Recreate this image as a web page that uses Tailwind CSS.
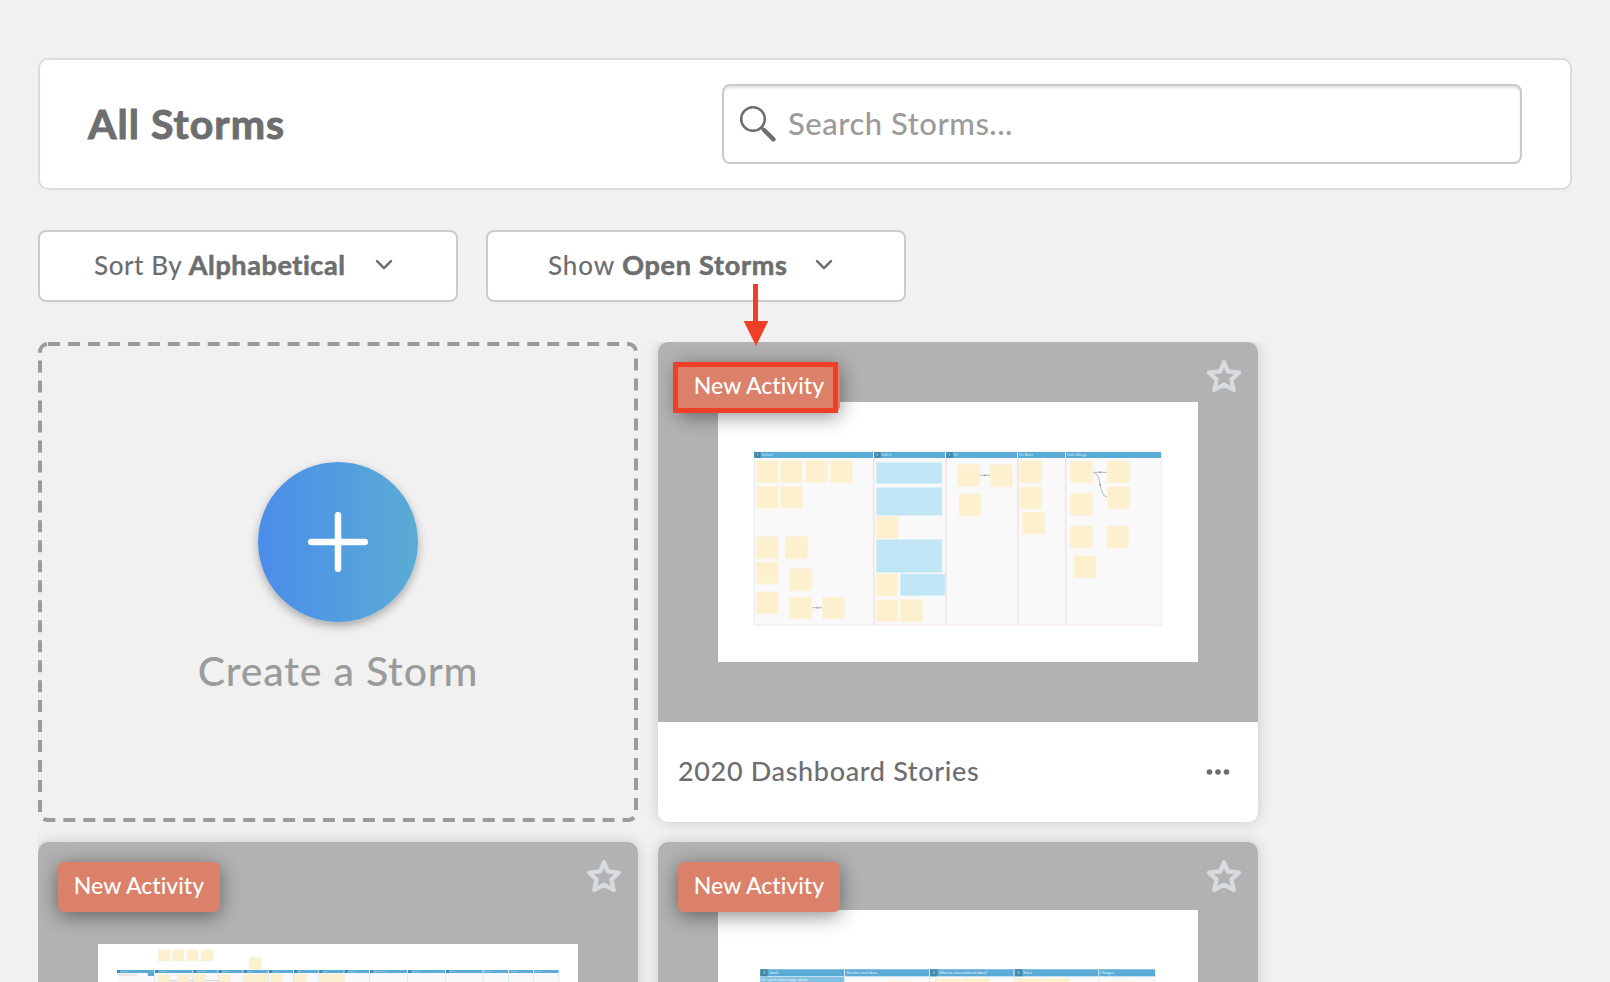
<!DOCTYPE html>
<html lang="en">
<head>
<meta charset="utf-8">
<title>All Storms</title>
<script src="https://cdn.jsdelivr.net/npm/@tailwindcss/browser@4"></script>
</head>
<body class="h-[982px] overflow-hidden bg-[#f1f1f1] font-['Lato',sans-serif] font-medium text-[#6d6e70]">
<svg class="hidden">
  <symbol id="star" viewBox="0 0 34 34"><path d="M17 3.2 20.7 12.3 32 13.6 24.3 20.6 26.8 31 17 25.7 7.2 31 9.7 20.6 2 13.6 13.3 12.3Z" fill="none" stroke="#d8dce1" stroke-width="4.2" stroke-linejoin="round"/></symbol>
  <symbol id="chevron" viewBox="0 0 20 14"><path d="M3 3.2 10 10.2 17 3.2" fill="none" stroke="#6d6e70" stroke-width="2.6" stroke-linecap="round" stroke-linejoin="round"/></symbol>
</svg>
<main class="relative flex h-full flex-col pl-[38px] pr-[38px] pt-[58px]">
  <header class="flex h-[132px] shrink-0 items-center justify-between rounded-[10px] border-2 border-[#d8dce1] bg-white pl-[48px] pr-[48px]">
    <h1 class="whitespace-nowrap pb-[2px] text-[41px] font-bold leading-none tracking-[1.05px] [-webkit-text-stroke:1px_#6d6e70]">All Storms</h1>
    <div class="flex h-[80px] w-[800px] items-center rounded-lg border-2 border-[#cacaca] bg-white pl-[14px] shadow-[inset_0_3px_3px_-1px_rgba(0,0,0,0.12)]">
      <svg class="h-[40px] w-[40px]" viewBox="0 0 40 40" fill="none" stroke="#6d6e70"><circle cx="15" cy="15" r="11.8" stroke-width="2.5"/><path d="M23.5 23.5 27 27" stroke-width="3"/><path d="M26 26 35.4 35.4" stroke-width="4.4" stroke-linecap="round"/></svg>
      <span class="ml-[10px] whitespace-nowrap pb-[2px] text-[31px] leading-none tracking-[0.5px] text-[#9b9b9b]">Search Storms...</span>
    </div>
  </header>
  <div class="mt-10 flex shrink-0 gap-7">
    <div class="flex h-[72px] w-[420px] items-center rounded-lg border-2 border-[#cacaca] bg-white pb-1 pl-[54px] text-[26px] leading-none">
      <span class="w-[256px] whitespace-nowrap tracking-[0.55px]">Sort By <b class="text-[27px] font-bold tracking-[0.6px] [-webkit-text-stroke:0.6px_#6d6e70]">Alphabetical</b></span>
      <svg class="ml-[24px] mt-px h-[14px] w-[20px]"><use href="#chevron"/></svg>
    </div>
    <div class="flex h-[72px] w-[420px] items-center rounded-lg border-2 border-[#cacaca] bg-white pb-1 pl-[60px] text-[26px] leading-none">
      <span class="w-[243px] whitespace-nowrap tracking-[0.9px]">Show <b class="text-[27px] font-bold tracking-[0.75px] [-webkit-text-stroke:0.6px_#6d6e70]">Open Storms</b></span>
      <svg class="ml-[23px] mt-px h-[14px] w-[20px]"><use href="#chevron"/></svg>
    </div>
  </div>
  <section class="mt-10 grid min-h-0 flex-1 auto-rows-[480px] grid-cols-[600px_600px] gap-5 overflow-hidden">
    <div class="relative flex flex-col items-center pt-[120px]">
      <svg class="absolute inset-0 h-full w-full" viewBox="0 0 600 480"><rect x="2" y="2" width="596" height="476" rx="8" fill="none" stroke="#9b9b9b" stroke-width="4" stroke-dasharray="12 7.97"/></svg>
      <div class="flex size-[160px] items-center justify-center rounded-full bg-linear-to-r from-[#4a8ceb] to-[#5bacd4] shadow-[0_4px_10px_rgba(0,0,0,0.3)]">
        <svg class="size-[60px]" viewBox="0 0 60 60" stroke="#fff" stroke-width="6.5" stroke-linecap="round"><path d="M30 3.3V56.7M3.3 30H56.7"/></svg>
      </div>
      <div class="mt-[28px] whitespace-nowrap text-[41px] leading-none tracking-[0.8px] text-[#9b9b9b]">Create a Storm</div>
    </div>

    <article class="relative overflow-visible rounded-[10px] bg-white shadow-[0_0_14px_rgba(0,0,0,0.17)]">
      <div class="flex h-[380px] items-center justify-center rounded-t-[10px] bg-[#b2b2b2]">
        <svg class="h-[260px] w-[480px] bg-white" viewBox="204 216 1440 780">
          <g fill="#f9f9f9" stroke="#f4e4e9" stroke-width="3"><rect x="313" y="366" width="357" height="519" stroke="#dfebf3"/><rect x="673" y="366" width="213" height="519"/><rect x="889" y="366" width="213" height="519"/><rect x="1105" y="366" width="141" height="519"/><rect x="1248" y="366" width="286" height="519"/></g>
          <g fill="#5aabd6"><rect x="313" y="366" width="356" height="18"/><rect x="673" y="366" width="212" height="18"/><rect x="889" y="366" width="212" height="18"/><rect x="1104" y="366" width="141" height="18"/><rect x="1248" y="366" width="285" height="18"/></g>
          <g fill="#4288ab"><rect x="313" y="366" width="19" height="18"/><rect x="673" y="366" width="19" height="18"/><rect x="889" y="366" width="19" height="18"/></g>
          <g fill="#cde6f3" font-size="9" font-family="Lato"><text x="320" y="378">1</text><text x="335" y="378">Section I</text><text x="679" y="378">2</text><text x="695" y="378">Folders</text><text x="895" y="378">3</text><text x="911" y="378">V3</text><text x="1107" y="378">Dev Notes</text><text x="1251" y="378">Folder Manage</text></g>
          <g fill="#c0e6f5" stroke="#d8eff8" stroke-width="2"><rect x="679" y="397" width="197" height="64"/><rect x="679" y="472" width="197" height="84"/><rect x="679" y="629" width="197" height="98"/><rect x="751" y="732" width="134" height="65"/></g>
          <path d="M487 833H518M990 436H1021M1330 427H1371M1330 427C1356 430 1345 496 1371 502" fill="none" stroke="#b9b9b9" stroke-width="3"/>
          <g fill="#a5a5a5"><circle cx="502" cy="833" r="3"/><circle cx="1005" cy="436" r="3"/><circle cx="1350" cy="427" r="3"/><circle cx="1350" cy="464" r="3"/></g>
          <path fill="#fdf0cf" stroke="#fdf5df" stroke-width="2" d="M318 392h66v66h-66zM391 392h66v66h-66zM467 392h66v66h-66zM541 392h66v66h-66zM318 469h66v66h-66zM391 469h66v66h-66zM318 620h66v66h-66zM407 620h66v66h-66zM318 696h66v66h-66zM419 716h66v66h-66zM318 785h66v66h-66zM419 801h66v66h-66zM518 801h66v66h-66zM678 559h66v66h-66zM678 732h66v66h-66zM678 809h66v66h-66zM751 809h66v66h-66zM923 403h66v66h-66zM1021 404h66v66h-66zM927 493h66v66h-66zM1108 392h66v66h-66zM1108 471h66v66h-66zM1118 546h66v66h-66zM1262 393h66v66h-66zM1372 393h66v66h-66zM1372 470h66v66h-66zM1262 490h66v66h-66zM1262 588h66v66h-66zM1370 589h66v66h-66zM1272 677h66v66h-66z"/>
        </svg>
      </div>
      <div class="flex h-[100px] items-center justify-between pl-[20px] pr-[28px]">
        <span class="whitespace-nowrap pb-1 text-[27px] leading-none tracking-[0.65px]">2020 Dashboard Stories</span>
        <svg class="h-[8px] w-[24px]" viewBox="0 0 24 8" fill="#6d6e70"><circle cx="3.5" cy="4" r="2.8"/><circle cx="12" cy="4" r="2.8"/><circle cx="20.5" cy="4" r="2.8"/></svg>
      </div>
      <div class="absolute left-5 top-5 flex h-[50px] w-[162px] items-center justify-center whitespace-nowrap rounded-md bg-[#db8069] pb-[3px] text-[23px] leading-none tracking-[0.02px] text-white shadow-[0_4px_20px_rgba(0,0,0,0.45)]">New Activity</div>
      <svg class="absolute right-[17px] top-[17px] size-[34px]"><use href="#star"/></svg>
    </article>

    <article class="relative rounded-[10px] bg-white shadow-[0_0_14px_rgba(0,0,0,0.17)]">
      <div class="flex h-[380px] justify-center rounded-t-[10px] bg-[#b2b2b2] pt-[102px]">
        <svg class="h-[176px] w-[480px] bg-white" viewBox="234 372 1440 528">
          <rect x="291" y="450" width="1326" height="300" fill="#f9f9f9"/>
          <rect x="291" y="450" width="1326" height="9" fill="#5aabd6"/>
          <rect x="295" y="461" width="108" height="7" fill="#e6e6e6"/><rect x="353" y="461" width="28" height="7" fill="#fff"/><rect x="384" y="459" width="18" height="9" fill="#5aabd6"/>
          <path d="M404 450V750M518.500 450V750M594 450V750M669.500 450V750M745 450V750M820.500 450V750M896.500 450V750M972.500 450V750M1048.500 450V750M1162.500 450V750M1276.500 450V750M1389.500 450V750M1465.500 450V750M1540.500 450V750M1617 450V750" stroke="#dbebf3" stroke-width="3"/>
          <path d="M291 450h9v9h-9zM406 450h9v9h-9zM520 450h9v9h-9zM596 450h9v9h-9zM671 450h9v9h-9zM747 450h9v9h-9zM822 450h9v9h-9zM898 450h9v9h-9zM974 450h9v9h-9zM1050 450h9v9h-9zM1164 450h9v9h-9zM1278 450h9v9h-9z" fill="#4288ab"/>
          <g fill="#b5dbee" font-size="6" font-family="Lato"><text x="303" y="457">Section I</text><text x="418" y="457">Section</text><text x="532" y="457">Welcome</text><text x="606" y="457">Board</text><text x="682" y="457">Card</text><text x="758" y="457">Nav</text><text x="833" y="457">Icon</text><text x="909" y="457">Misc</text><text x="984" y="457">Project</text><text x="1060" y="457">September 5.0</text><text x="1175" y="457">Add new</text><text x="1288" y="457">Future</text><text x="1391" y="457">Icon filter</text><text x="1467" y="457">Add icons</text><text x="1542" y="457">Old ideas</text></g>
          <path d="M449 482H474M508 482H522M556 482H597" stroke="#ccc" stroke-width="3"/>
          <path fill="#fdf0cf" stroke="#f3f2e2" stroke-width="2" d="M415 390h35v33h-35zM457 390h35v33h-35zM499 390h35v33h-35zM544 390h35v33h-35zM688 413h35v34h-35zM415 464h34v33h-34zM474 464h34v33h-34zM522 462h34v33h-34zM597 464h34v33h-34zM670 462h35v33h-35zM708 462h35v33h-35zM751 462h35v33h-35zM823 462h35v33h-35zM900 462h35v33h-35zM938 462h35v33h-35z"/>
        </svg>
      </div>
      <div class="absolute left-5 top-5 flex h-[50px] w-[162px] items-center justify-center whitespace-nowrap rounded-md bg-[#db8069] pb-[3px] text-[23px] leading-none tracking-[0.02px] text-white shadow-[0_4px_20px_rgba(0,0,0,0.45)]">New Activity</div>
      <svg class="absolute right-[17px] top-[17px] size-[34px]"><use href="#star"/></svg>
    </article>

    <article class="relative rounded-[10px] bg-white shadow-[0_0_14px_rgba(0,0,0,0.17)]">
      <div class="flex h-[380px] justify-center rounded-t-[10px] bg-[#b2b2b2] pt-[68px]">
        <svg class="h-[244px] w-[480px] bg-white" viewBox="234 270 1440 732">
          <rect x="361" y="448" width="1184" height="420" fill="#f9f9f9" stroke="#dbebf3" stroke-width="2"/>
          <rect x="361" y="448" width="1184" height="21" fill="#5aabd6"/>
          <rect x="361" y="471" width="251" height="60" fill="#80c1e2"/>
          <path d="M613.500 448V868M868.500 448V868M1122 448V868M1376 448V868" stroke="#dbebf3" stroke-width="3"/>
          <path d="M361 448h22v21h-22zM870 448h22v21h-22zM1125 448h22v21h-22z" fill="#4288ab"/>
          <g fill="#e0f0f8" font-size="11" font-family="Lato"><text x="370" y="462">1</text><text x="388" y="462">Goals</text><text x="619" y="462">Sketches and Ideas</text><text x="878" y="462">2</text><text x="897" y="462" textLength="145">What are users confused about?</text><text x="1132" y="462">3</text><text x="1150" y="462">Rules</text><text x="1380" y="462">Changes</text><text x="366" y="483" textLength="138">Id / quick account page update</text></g>
          <path fill="#fdf0cf" d="M885 475h79v60h-79zM970 475h79v60h-79zM1127 475h79v60h-79zM1210 475h79v60h-79zM741 484h77v60h-77zM1403 484h77v60h-77z"/>
        </svg>
      </div>
      <div class="absolute left-5 top-5 flex h-[50px] w-[162px] items-center justify-center whitespace-nowrap rounded-md bg-[#db8069] pb-[3px] text-[23px] leading-none tracking-[0.02px] text-white shadow-[0_4px_20px_rgba(0,0,0,0.45)]">New Activity</div>
      <svg class="absolute right-[17px] top-[17px] size-[34px]"><use href="#star"/></svg>
    </article>
  </section>

  <div class="absolute left-[673px] top-[362px] h-[51px] w-[165px] border-[5px] border-[#ee4026]"></div>
  <svg class="absolute left-[743px] top-[284px] h-[62px] w-[26px]" viewBox="0 0 26 62" fill="#ee4026"><path d="M10 0h5v37h10.300L13 62 .7 37H10z"/></svg>
</main>
</body>
</html>
